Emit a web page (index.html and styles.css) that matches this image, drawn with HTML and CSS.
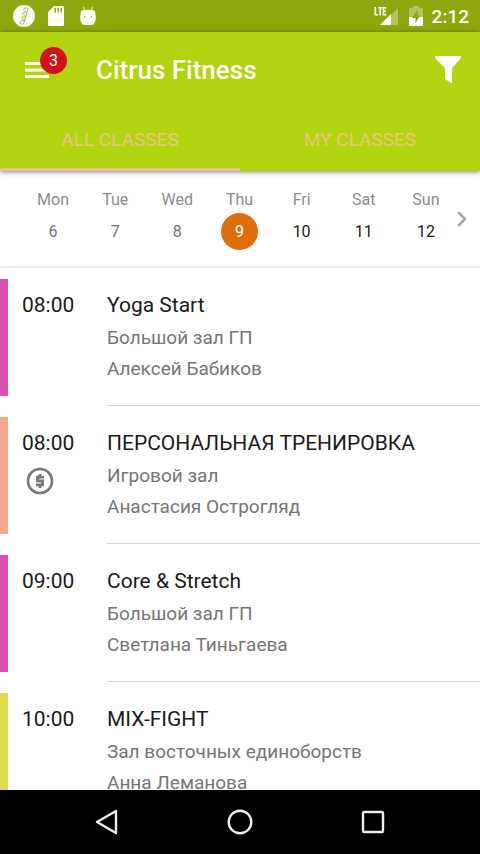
FILE: index.html
```html
<!DOCTYPE html>
<html lang="en">
<head>
<meta charset="utf-8">
<meta name="viewport" content="width=device-width, initial-scale=1">
<title>Citrus Fitness</title>
<link rel="stylesheet" href="styles.css">
</head>
<body>
<div class="status">
  <svg class="status-logo" viewBox="0 0 22 22" width="22" height="22" aria-hidden="true"><circle cx="11" cy="11" r="11" fill="#fffff2"/><path d="M13.500 3c-3 .3-4 2-2 2.600 2.500.8 2 2-.5 2s-2.500 2 0 2.200 2.500 2 0 2-3 2-.5 2.200 2 2.200-.5 1.600-3.500 1.400-2.500 3c.8 1.200 3 .6 3.500-1.200L15 4c.2-1-.6-1.200-1.500-1z" fill="none" stroke="#a9b55c" stroke-width="1"/></svg>
  <svg class="status-card" viewBox="0 0 16 20" width="16" height="20" aria-hidden="true"><path fill="#fffff5" d="M6 0h8.500Q16 0 16 1.500v17Q16 20 14.500 20h-13Q0 20 0 18.500V6z"/><path stroke="#8fa60d" stroke-width="1.500" d="M7.200 2v4.500M10.200 2v4.500M13.200 2v4.500"/></svg>
  <svg class="status-droid" viewBox="0 0 16 20" width="16" height="20" aria-hidden="true"><path stroke="#fffff2" stroke-width="1" d="M3.500 1l1 4M12.500 1l-1 4"/><path fill="#fffff2" d="M1 5q7-2.500 14 0 1.500 7 0 11-1 3-4 3H5q-3 0-4-3-1.500-4 0-11z"/><circle cx="4.500" cy="11" r=".8" fill="#8a9450"/><circle cx="11.500" cy="11" r=".8" fill="#8a9450"/></svg>
  <span class="spacer"></span>
  <svg class="status-signal" viewBox="0 0 24 20" width="24" height="20" role="img" aria-label="LTE signal"><path fill="#b4c25c" d="M24 2v17h-7V9z"/><path fill="#fff" d="M17 8v11H6z"/><path fill="none" stroke="#fff" stroke-width="1.600" d="M1.300 1v7.700H4M4.200 1.800h4M6.200 1.800V9.500M12.300 1.800H9.500v6.900h2.800M9.500 5.200h2.500"/></svg>
  <svg class="status-battery" viewBox="0 0 14 20" width="14" height="20" role="img" aria-label="Battery charging"><path fill="#b4c25c" d="M4 2V0h6v2h3q1 0 1 1v8H0V3q0-1 1-1z"/><path fill="#fff" d="M0 11h14v8q0 1-1 1H1q-1 0-1-1z"/><path fill="#8fa60d" d="M8.500 4L3 12h3.500v5L11 9.500H8.500z"/></svg>
  <time class="clock">2:12</time>
</div>
<header class="header">
  <div class="appbar">
    <button class="icon-btn menu" aria-label="Menu, 3 notifications">
      <svg viewBox="0 0 24 18" width="24" height="18"><path stroke="#fffff0" stroke-width="2.800" d="M0 2.500h24M0 9h24M0 15.500h24"/></svg>
      <span class="badge">3</span>
    </button>
    <h1 class="title">Citrus Fitness</h1>
    <button class="icon-btn" aria-label="Filter">
      <svg viewBox="0 0 26 28" width="26" height="28"><path fill="#fff" d="M0 0h26v2l-9 10v15.500L10 23V12L0 2z"/></svg>
    </button>
  </div>
  <nav class="tabs">
    <button class="tab tab-active">ALL CLASSES</button>
    <button class="tab">MY CLASSES</button>
  </nav>
</header>
<section class="week">
  <button class="day"><span class="name">Mon</span><span class="num">6</span></button>
  <button class="day"><span class="name">Tue</span><span class="num">7</span></button>
  <button class="day"><span class="name">Wed</span><span class="num">8</span></button>
  <button class="day"><span class="name">Thu</span><span class="num num-selected">9</span></button>
  <button class="day"><span class="name">Fri</span><span class="num num-next">10</span></button>
  <button class="day"><span class="name">Sat</span><span class="num num-next">11</span></button>
  <button class="day"><span class="name">Sun</span><span class="num num-next">12</span></button>
  <button class="next" aria-label="Next week"><svg viewBox="0 0 10 16" width="10" height="16"><path fill="none" stroke="#a6a6a6" stroke-width="2.600" d="M1.200 1.200L8 8l-6.800 6.800"/></svg></button>
</section>
<main class="list">
  <article class="class">
    <span class="bar bar-magenta"></span>
    <div class="when"><time>08:00</time></div>
    <div class="info"><h2>Yoga Start</h2><p>Большой зал ГП</p><p>Алексей Бабиков</p></div>
  </article>
  <article class="class">
    <span class="bar bar-peach"></span>
    <div class="when"><time>08:00</time>
      <svg class="paid" viewBox="0 0 28 28" width="28" height="28" role="img" aria-label="Paid class"><circle cx="14" cy="14" r="12" fill="none" stroke="#757575" stroke-width="2.600"/><path fill="none" stroke="#757575" stroke-width="2.800" d="M18 10.200h-6.500v3.700h5v3.900H10M14 7v3M14 18v3"/></svg>
    </div>
    <div class="info"><h2>ПЕРСОНАЛЬНАЯ ТРЕНИРОВКА</h2><p>Игровой зал</p><p>Анастасия Острогляд</p></div>
  </article>
  <article class="class">
    <span class="bar bar-magenta"></span>
    <div class="when"><time>09:00</time></div>
    <div class="info"><h2>Core &amp; Stretch</h2><p>Большой зал ГП</p><p>Светлана Тиньгаева</p></div>
  </article>
  <article class="class">
    <span class="bar bar-yellow"></span>
    <div class="when"><time>10:00</time></div>
    <div class="info"><h2>MIX-FIGHT</h2><p>Зал восточных единоборств</p><p>Анна Леманова</p></div>
  </article>
</main>
<footer class="sysnav">
  <button aria-label="Back"><svg viewBox="0 0 28 28" width="28" height="28"><path fill="none" stroke="#eee" stroke-width="2.400" stroke-linejoin="round" d="M23 3v22L4 14z"/></svg></button>
  <button aria-label="Home"><svg viewBox="0 0 28 28" width="28" height="28"><circle cx="14" cy="14" r="11.300" fill="none" stroke="#eee" stroke-width="2.400"/></svg></button>
  <button aria-label="Recent apps"><svg viewBox="0 0 28 28" width="28" height="28"><rect x="4" y="4" width="20" height="20" rx="1" fill="none" stroke="#eee" stroke-width="2.400"/></svg></button>
</footer>
</body>
</html>
```
FILE: styles.css
```css
* { box-sizing: border-box; }

body {
  margin: 0;
  height: 100vh;
  display: flex;
  flex-direction: column;
  background: #fff;
  color: #1a1a1a;
  font-family: Roboto, "Noto Sans", sans-serif;
  overflow: hidden;
}

button {
  border: 0;
  padding: 0;
  background: none;
  color: inherit;
  font: inherit;
  cursor: pointer;
}

svg { display: block; }
h1, h2, p { margin: 0; font-weight: 400; }

/* System status bar */
.status {
  flex: none;
  display: flex;
  align-items: center;
  height: 32px;
  padding: 0 11px 0 13px;
  background: #8fa60d;
  color: #fff;
}
.status-card { margin-left: 13px; }
.status-droid { margin-left: 16px; }
.spacer { flex: 1; }
.status-battery { margin-left: 11px; }
.clock {
  margin-left: 9px;
  font-size: 19px;
  font-weight: 500;
}

/* App header */
.header {
  flex: none;
  position: relative;
  z-index: 1;
  background: #b2d310;
  box-shadow: 0 1px 5px rgba(0, 0, 0, 0.5);
}
.appbar {
  display: flex;
  align-items: center;
  height: 75px;
  padding: 0 19px 0 25px;
}
.icon-btn { position: relative; }
.badge {
  position: absolute;
  top: -14px;
  left: 15px;
  width: 27px;
  height: 27px;
  border-radius: 50%;
  background: #d0121b;
  color: #fff;
  font-size: 16px;
  line-height: 27px;
  text-align: center;
}
.title {
  flex: 1;
  margin-left: 47px;
  color: #fffff0;
  font-size: 26px;
  font-weight: 500;
}
.tabs { display: flex; height: 64px; }
.tab {
  flex: 1;
  padding-top: 4px;
  border-bottom: 3px solid transparent;
  color: #e5ca78;
  font-size: 19px;
}
.tab-active { border-color: #f0c095; }

/* Week strip */
.week {
  flex: none;
  display: flex;
  height: 97px;
  padding: 15px 0 0 22px;
  border-bottom: 2px solid #ebebeb;
}
.day {
  flex: 1;
  display: flex;
  flex-direction: column;
  align-items: center;
  font-size: 16px;
}
.name { color: #8c8c8c; line-height: 27px; }
.num {
  width: 37px;
  height: 37px;
  border-radius: 50%;
  color: #757575;
  line-height: 37px;
  text-align: center;
}
.num-selected { background: #de6e0b; color: #fff; }
.num-next { color: #1a1a1a; }
.next { display: flex; align-items: center; width: 23px; height: 66px; }

/* Class list */
.list { flex: 1; min-height: 0; overflow: hidden; }
.class { display: flex; padding-top: 11px; }
.bar { width: 8px; height: 117px; margin-bottom: 10px; }
.bar-magenta { background: #d94fb0; }
.bar-peach { background: #f8a78f; }
.bar-yellow { background: #dcdc4e; }
.when { width: 99px; padding: 10px 0 0 14px; font-size: 21px; line-height: 33px; }
.when time { display: block; }
.paid { margin: 7px 0 0 4px; }
.info {
  flex: 1;
  padding-top: 10px;
  border-bottom: 1px solid #d6d6d6;
}
.info h2 { font-size: 21px; line-height: 33px; }
.info p { color: #757575; font-size: 19px; line-height: 31px; }

/* System navigation */
.sysnav {
  flex: none;
  display: flex;
  justify-content: center;
  gap: 105px;
  height: 64px;
  background: #000;
}
```
